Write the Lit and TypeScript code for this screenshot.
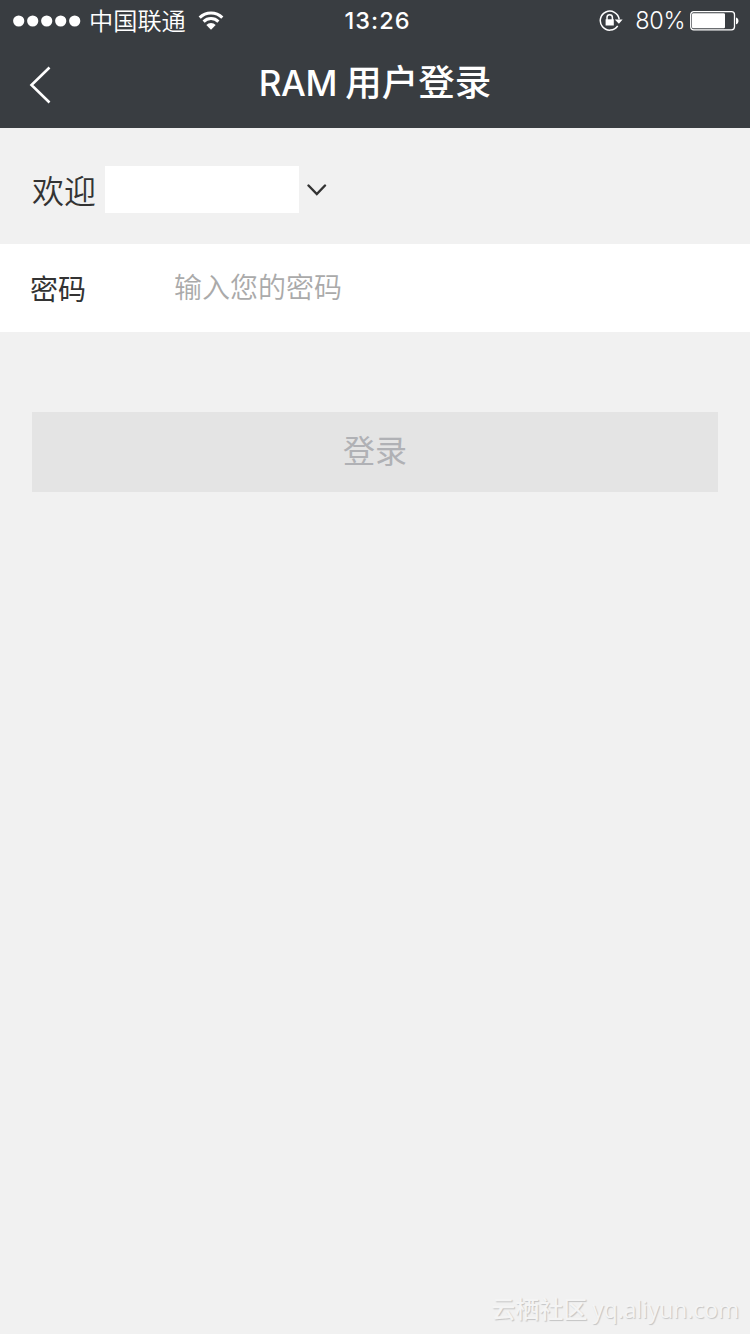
import { LitElement, html, css } from "lit";
import { customElement } from "lit/decorators.js";

@customElement("status-bar")
class StatusBar extends LitElement {
  static styles = css`
    :host {
      display: grid;
      grid-template-columns: 1fr auto 1fr;
      align-items: center;
      height: 40px;
      padding: 0 11px 0 13px;
      box-sizing: border-box;
      color: #fff;
    }
    svg { display: block; flex: none; }
    .left, .right { display: flex; align-items: center; }
    .right { justify-content: flex-end; }
    .carrier {
      margin: 0 12px 2px 8px;
      font: 350 24.2px/38px "Noto Sans CJK SC", sans-serif;
      white-space: nowrap;
    }
    .time {
      font: 500 23.5px/40px Inter, sans-serif;
      letter-spacing: 1px;
      padding-left: 3px;
    }
    .percent {
      font: 350 23.5px/40px Inter, sans-serif;
      letter-spacing: -0.4px;
      margin: 1px 5px 0 12px;
    }
  `;

  render() {
    return html`
      <div class="left">
        <svg width="68" height="12" fill="#fff">
          ${[0, 1, 2, 3, 4].map((i) => {
            const x = i * 14;
            return html`<svg x=${x} width="12" height="12" viewBox="0 0 12 12"><circle cx="5.7" cy="6" r="5.6" /></svg>`;
          })}
        </svg>
        <span class="carrier">中国联通</span>
        <svg width="26" height="20" viewBox="0 0 26 20" fill="none" stroke="#fff" stroke-width="3">
          <path d="M1.7 6.6a16 16 0 0 1 22.6 0M5.6 10.6a10.5 10.5 0 0 1 14.8 0" />
          <path d="M8.3 13.9a6.6 6.6 0 0 1 9.4 0L13 18.7z" fill="#fff" stroke="none" />
        </svg>
      </div>
      <span class="time">13:26</span>
      <div class="right">
        <svg width="24" height="22" viewBox="0 0 24 22" fill="none" stroke="#fff" stroke-width="1.5">
          <path d="M18.7 15.9A9.5 9.5 0 1 1 20.2 9.3" />
          <path d="M15.8 9.6h7.8l-3.7 4.2z" fill="#fff" stroke="none" />
          <path d="M6.6 9.3h8.2v6.2H6.6z" fill="#fff" stroke="none" />
          <path d="M8 10V7.4a2.7 2.7 0 0 1 5.4 0V10" />
        </svg>
        <span class="percent">80%</span>
        <svg width="49" height="20" viewBox="0 0 49 20">
          <rect x=".7" y=".7" width="43.8" height="18.1" rx="3" fill="none" stroke="#fff" stroke-width="1.3" />
          <rect x="2" y="2.2" width="33" height="15" rx="1.2" fill="#fff" />
          <path d="M46 6.5c3.3.8 3.3 6 0 6.8z" fill="#fff" />
        </svg>
      </div>
    `;
  }
}

@customElement("app-root")
class AppRoot extends LitElement {
  static styles = css`
    :host {
      display: flex;
      flex-direction: column;
      height: 1334px;
      background: #f1f1f1;
      color: #333;
      font-family: "Noto Sans CJK SC", sans-serif;
      overflow: hidden;
    }
    svg { display: block; flex: none; }
    .top { background: #393d41; color: #fff; height: 128px; }
    .nav {
      display: grid;
      grid-template-columns: 80px 1fr 80px;
      align-items: center;
      height: 88px;
    }
    .back { margin: 2px 0 0 29px; }
    h1 {
      display: flex;
      justify-content: center;
      align-items: baseline;
      gap: 8px;
      margin: 0;
      padding-bottom: 4px;
      font: 500 36.5px/60px "Noto Sans CJK SC", sans-serif;
      white-space: nowrap;
    }
    .latin { font: 500 35px/60px Inter, sans-serif; letter-spacing: -0.3px; }
    .welcome {
      display: flex;
      align-items: center;
      height: 116px;
      box-sizing: border-box;
      padding: 0 32px 0 32px;
      font-size: 32px;
      font-weight: 350;
      line-height: 48px;
    }
    .hello { padding-top: 5px; }
    .user { width: 194px; height: 47px; margin: 7px 8px 0 9px; background: #fff; }
    .arrow { margin-top: 8px; }
    .field {
      display: flex;
      height: 88px;
      padding: 0 30px;
      background: #fff;
      font-size: 28px;
      line-height: 88px;
    }
    label { width: 144px; }
    .placeholder { color: #aaa; font-weight: 350; line-height: 84px; }
    .submit {
      display: block;
      height: 80px;
      margin: 80px 32px 0;
      padding: 0 0 5px;
      border: 0;
      background: #e4e4e4;
      color: #b0b1b5;
      font: 400 32px/75px "Noto Sans CJK SC", sans-serif;
      text-align: center;
    }
    .mark {
      display: flex;
      justify-content: flex-end;
      align-items: baseline;
      gap: 5px;
      margin: auto 11px 4px 0;
      color: #f4f4f4;
      text-shadow: 1px 1px 1px #c4c4c4;
      font-size: 24px;
      line-height: 40px;
      white-space: nowrap;
    }
    .site { font-weight: 500; }
    .domain { font-family: "Open Sans", sans-serif; font-size: 22.8px; }
  `;

  render() {
    return html`
      <header class="top">
        <status-bar></status-bar>
        <div class="nav">
          <svg class="back" width="24" height="38" viewBox="0 0 24 38" fill="none" stroke="#fff" stroke-width="2.6">
            <path d="M20.5 1.5L2.5 19L20.5 36.5" />
          </svg>
          <h1><span class="latin">RAM</span><span>用户登录</span></h1>
        </div>
      </header>
      <section class="welcome">
        <span class="hello">欢迎</span>
        <span class="user"></span>
        <svg class="arrow" width="20" height="14" viewBox="0 0 20 14" fill="none" stroke="#333" stroke-width="2.4" stroke-linecap="round">
          <path d="M1.5 2.5L9.8 11L18 2.5" />
        </svg>
      </section>
      <div class="field">
        <label>密码</label>
        <span class="placeholder">输入您的密码</span>
      </div>
      <button class="submit" type="button">登录</button>
      <footer class="mark"><span class="site">云栖社区</span><span class="domain">yq.aliyun.com</span></footer>
    `;
  }
}
